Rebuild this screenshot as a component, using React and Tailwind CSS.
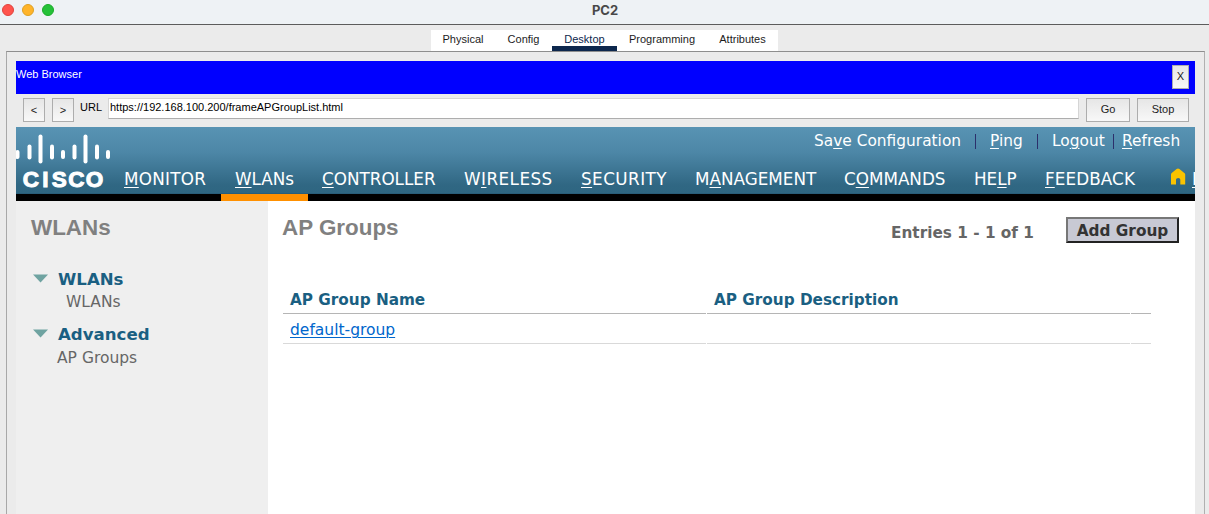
const verdana = "font-['DejaVu_Sans',sans-serif]";

function Key({ text, at, length = 1 }) {
  if (at < 0) return text;
  return (
    <>
      {text.slice(0, at)}
      <span className="underline decoration-1 underline-offset-2">{text.slice(at, at + length)}</span>
      {text.slice(at + length)}
    </>
  );
}

const tabs = [
  { label: 'Physical', width: 'w-[64px]' },
  { label: 'Config', width: 'w-[57px]' },
  { label: 'Desktop', width: 'w-[65px]', active: true },
  { label: 'Programming', width: 'w-[90px]' },
  { label: 'Attributes', width: 'w-[71px]' },
];

const menu = [
  { label: 'MONITOR', at: 0, cls: 'w-[97px] pl-0 tracking-[0.28px]' },
  { label: 'WLANs', at: 0, cls: 'w-[87px] pl-[14px]', active: true },
  { label: 'CONTROLLER', at: 0, cls: 'w-[142px] pl-[14px]' },
  { label: 'WIRELESS', at: 1, cls: 'w-[117px] pl-[14px] tracking-[0.45px]' },
  { label: 'SECURITY', at: 0, cls: 'w-[114px] pl-[14px] tracking-[0.45px]' },
  { label: 'MANAGEMENT', at: 1, cls: 'w-[149px] pl-[14px]' },
  { label: 'COMMANDS', at: 1, cls: 'w-[130px] pl-[14px]' },
  { label: 'HELP', at: 2, cls: 'w-[71px] pl-[14px]' },
  { label: 'FEEDBACK', at: 0, cls: 'w-[140px] pl-[14px] tracking-[0.1px]' },
];

function Button({ children, className }) {
  return (
    <button className={`flex h-[24px] justify-center border border-[#adadad] bg-linear-to-b from-[#e6e6e6] to-[#f8f8f8] text-[11px] leading-[14px] text-[#1c1c1c] ${className}`}>
      {children}
    </button>
  );
}

function CiscoLogo() {
  const bars = [
    [17.5, 152, 157], [29.5, 146.5, 157.5], [40.5, 136.5, 161.5], [52, 146.5, 157.5], [63, 152, 157],
    [74.5, 146.5, 157.5], [85.5, 136.5, 161.5], [97, 146.5, 157.5], [108, 152, 157],
  ];
  return (
    <svg className="h-[67px] w-[96px] shrink-0" viewBox="16 127 96 67">
      {bars.map(([x, y1, y2]) => (
        <line key={x} x1={x} x2={x} y1={y1} y2={y2} stroke="#fff" strokeWidth="4" strokeLinecap="round" />
      ))}
      <text
        x="22.8 42.2 51.7 68.3 85.7"
        y="187.2"
        fill="#fff"
        stroke="#fff"
        strokeWidth="1"
        className="font-['Liberation_Sans',sans-serif] text-[22.5px] font-bold"
      >
        CISCO
      </text>
    </svg>
  );
}

function SideGroup({ title, item, className, itemClass }) {
  return (
    <section className={className}>
      <div className="flex h-[22px] items-start">
        <svg className="mt-[6px] ml-[16px] h-[9px] w-[17px]" viewBox="0 0 17 9">
          <path d="M1 .5h15L8.500 8.500z" fill="#6fa3a1" />
        </svg>
        <h2 className="ml-[9px] text-[16.6px] leading-[23px] font-bold text-[#1a5f82]">{title}</h2>
      </div>
      <div className={`text-[15.5px] leading-[24px] text-[#666] ${itemClass}`}>{item}</div>
    </section>
  );
}

function Divider({ className }) {
  return <span className={`h-[15px] w-px bg-[#2c2f6b] ${className}`} />;
}

export default function App() {
  return (
    <div className="flex h-[514px] w-[1209px] flex-col overflow-hidden bg-[#ebebeb] font-['Liberation_Sans',sans-serif]">
      <header className="grid h-[25px] shrink-0 grid-cols-[1fr_auto_1fr] border-b border-[#5c5c5c] bg-[#eef2f5]">
        <div className="flex gap-[8px] pt-[4px] pl-[2px]">
          <i className="size-[12px] rounded-full border border-[#e0443e] bg-[#ff544d]" />
          <i className="size-[12px] rounded-full border border-[#dea123] bg-[#ffb429]" />
          <i className="size-[12px] rounded-full border border-[#1aab29] bg-[#25c138]" />
        </div>
        <h1 className="pt-[2px] pl-px font-['Inter',sans-serif] text-[13px] leading-[16px] font-bold text-[#484848]">PC2</h1>
      </header>

      <nav className="ml-[431px] flex h-[26px] w-[347px] shrink-0 pt-[5px]">
        {tabs.map((tab) => (
          <div
            key={tab.label}
            className={`flex h-[21px] justify-center border-b-[5px] bg-white pt-[2px] text-[11px] leading-[14px] whitespace-nowrap ${tab.width} ${tab.active ? 'border-[#0d274d] text-[#0d274d]' : 'border-white text-[#1c1c1c]'}`}
          >
            {tab.label}
          </div>
        ))}
      </nav>

      <main className="mr-[4px] ml-[6px] flex flex-1 flex-col border border-b-0 border-t-[#8e8e8e] border-r-[#b0b0b0] border-l-[#a8a8a8] pt-[9px] pr-[9px] pl-[9px]">
        <div className="flex h-[33px] shrink-0 justify-between bg-[#0000ff] pt-[4px] pr-[6px]">
          <span className="pt-[2px] text-[11px] leading-[14px] text-white">Web Browser</span>
          <Button className="w-[17px] pt-[3px]">X</Button>
        </div>

        <div className="flex h-[33px] shrink-0 pt-[4px] pl-[7px]">
          <Button className="w-[22px] pt-[4px]">&lt;</Button>
          <Button className="ml-[7px] w-[22px] pt-[4px]">&gt;</Button>
          <label className="ml-[6px] w-[28px] pt-[2px] text-[11px] leading-[14px] text-black">URL</label>
          <div className="h-[21px] w-[971px] border border-[#d5d5d5] border-b-[#adadad] bg-white pt-[1px] pl-[1px] text-[11px] leading-[14px] text-black">
            https://192.168.100.200/frameAPGroupList.html
          </div>
          <Button className="ml-[7px] w-[44px] pt-[3px]">Go</Button>
          <Button className="ml-[7px] w-[52px] pt-[3px]">Stop</Button>
        </div>

        <div className={`flex h-[74px] w-[1179px] shrink-0 overflow-hidden bg-[linear-gradient(#5893b3_0px,#4d87a7_25px,#306783_58px,#2e6681_66px,#245470_67px,#000_67px)] text-white ${verdana}`}>
          <CiscoLogo />
          <div className="flex w-[1083px] shrink-0 flex-col">
            <div className="flex h-[38px] pt-[4px] pl-[702px] text-[15.4px] leading-[20px] whitespace-nowrap">
              <span className="w-[161px]"><Key text="Save Configuration" at={2} /></span>
              <Divider className="mt-[3px]" />
              <span className="ml-[14px] w-[47px]"><Key text="Ping" at={0} /></span>
              <Divider className="mt-[3px]" />
              <span className="ml-[14px] w-[61px]"><Key text="Logout" at={2} /></span>
              <Divider className="mt-[3px]" />
              <span className="ml-[8px]"><Key text="Refresh" at={0} /></span>
            </div>
            <div className="flex h-[36px] pl-[12px] text-[16.8px] leading-[28px] whitespace-nowrap">
              {menu.map((item) => (
                <div key={item.label} className={`h-[36px] shrink-0 border-b-[7px] ${item.active ? 'border-[#ff9000]' : 'border-transparent'} ${item.cls}`}>
                  <Key text={item.label} at={item.at} />
                </div>
              ))}
              <svg className="mt-[3px] -ml-[1px] h-[17px] w-[16px] shrink-0" viewBox="0 0 16 17">
                <path d="M1 6.500Q1 5.500 2 4.700L6.600 1Q8 0 9.400 1L14 4.700Q15.200 5.500 15.200 6.500V16.500H10.300V11.500Q10.300 10 8.200 10T6 11.500V16.500H1z" fill="#fbc300" />
              </svg>
              <span className="ml-[6px] underline underline-offset-2">L</span>
            </div>
          </div>
        </div>

        <div className={`flex flex-1 ${verdana}`}>
          <aside className="w-[252px] bg-[#efefef] pt-[14px]">
            <h1 className="pl-[15px] font-['Liberation_Sans',sans-serif] text-[22.4px] leading-[26px] font-bold text-[#808080]">WLANs</h1>
            <SideGroup className="pt-[27px]" title="WLANs" item="WLANs" itemClass="pl-[50px]" />
            <SideGroup className="pt-[9px]" title="Advanced" item="AP Groups" itemClass="pl-[41px] pt-[1px]" />
          </aside>
          <section className="flex-1 bg-white">
            <div className="flex h-[80px] pt-[14px] pl-[14px]">
              <h1 className="w-[609px] font-['Liberation_Sans',sans-serif] text-[22.4px] leading-[26px] font-bold text-[#808080]">AP Groups</h1>
              <span className="w-[175px] pt-[8px] text-[15.3px] leading-[20px] font-bold whitespace-nowrap text-[#666]">Entries 1 - 1 of 1</span>
              <button className="mt-[2px] h-[26px] w-[113px] border-2 border-t-[#777] border-r-[#222] border-b-[#222] border-l-[#777] bg-[#c8c9d4] text-[15.3px] leading-[24px] font-bold whitespace-nowrap text-[#333]">
                Add Group
              </button>
            </div>
            <div className="grid grid-cols-[423px_423px_20px] gap-x-px pl-[15px] text-[15.5px] whitespace-nowrap">
              <div className="h-[33px] border-b border-[#b5b5b5] pt-[9px] pl-[7px] text-[15.25px] leading-[20px] font-bold text-[#1a5f82]">AP Group Name</div>
              <div className="h-[33px] border-b border-[#b5b5b5] pt-[9px] pl-[7px] text-[15.25px] leading-[20px] font-bold text-[#1a5f82]">AP Group Description</div>
              <div className="h-[33px] border-b border-[#b5b5b5]" />
              <div className="h-[30px] border-b border-[#d9d9d9] pt-[6px] pl-[7px] leading-[20px] text-[#0066cc]">
                <a className="underline decoration-1 underline-offset-2">default-group</a>
              </div>
              <div className="h-[30px] border-b border-[#d9d9d9]" />
              <div className="h-[30px] border-b border-[#d9d9d9]" />
            </div>
          </section>
        </div>
      </main>
    </div>
  );
}
